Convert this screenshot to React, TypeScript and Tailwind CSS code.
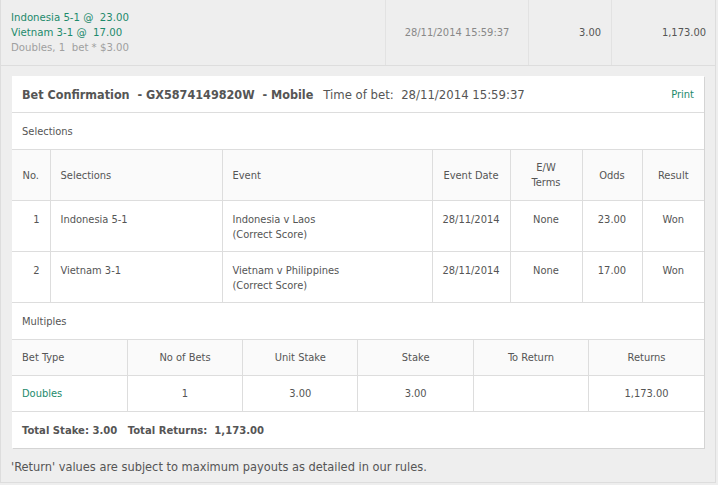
import React from 'react';

const selections = [
  { no: 1, sel: 'Indonesia 5-1', event: 'Indonesia v Laos', date: '28/11/2014', ew: 'None', odds: '23.00', result: 'Won' },
  { no: 2, sel: 'Vietnam 3-1', event: 'Vietnam v Philippines', date: '28/11/2014', ew: 'None', odds: '17.00', result: 'Won' },
];

const th = 'border border-[#dddddd] bg-[#fafafa] font-normal align-middle';
const td = 'border border-[#dddddd] align-top pt-[11px]';
const mtd = 'border border-[#dddddd] align-middle';

export default function App() {
  return (
    <div className="w-[718px] h-[485px] bg-[#eeeeee] text-[#555555] text-[11px] leading-[15px] font-['DejaVu_Sans_Condensed','DejaVu_Sans',sans-serif]">
      <div className="w-[716px] h-[483px] border-l border-r border-b border-[#dddddd]">
        {/* Summary row */}
        <div className="flex h-[66px] border-b border-[#dddddd]">
          <div className="w-[385px] border-r border-[#e2e2e2] pl-[10px] pt-[10px] text-[11.3px]">
            <div className="text-[#1d8a6c]">Indonesia 5-1 @&nbsp; 23.00</div>
            <div className="text-[#1d8a6c]">Vietnam 3-1 @&nbsp; 17.00</div>
            <div className="text-[#a0a0a0]">Doubles, 1&nbsp; bet * $3.00</div>
          </div>
          <div className="w-[143px] border-r border-[#e2e2e2] flex items-center justify-center text-[#888888]">
            28/11/2014 15:59:37
          </div>
          <div className="w-[83px] border-r border-[#e2e2e2] flex items-center justify-end pr-[10px]">3.00</div>
          <div className="flex-1 flex items-center justify-end pr-[9px]">1,173.00</div>
        </div>

        <div className="pt-[10px] pl-[11px] pr-[10px]">
          <div className="w-[692px] bg-white shadow-[1px_1px_0_#d4d4d4]">
            {/* Card header */}
            <div className="h-[37px] border-b border-[#dddddd] flex items-center px-[10px]">
              <span className="font-bold text-[12.5px]">Bet Confirmation&nbsp; - GX5874149820W&nbsp; - Mobile</span>
              <span className="ml-[10px] text-[13px]">Time of bet:&nbsp; 28/11/2014 15:59:37</span>
              <span className="ml-auto text-[#1d8a6c]">Print</span>
            </div>
            <div className="h-[36px] flex items-center px-[10px]">Selections</div>

            <table className="w-[692px] table-fixed border-collapse">
              <colgroup>
                <col className="w-[38px]" />
                <col className="w-[172px]" />
                <col className="w-[210px]" />
                <col className="w-[78px]" />
                <col className="w-[72px]" />
                <col className="w-[60px]" />
                <col className="w-[62px]" />
              </colgroup>
              <thead>
                <tr className="h-[51px]">
                  <th className={`${th} border-l-0 text-center`}>No.</th>
                  <th className={`${th} text-left pl-[10px]`}>Selections</th>
                  <th className={`${th} text-left pl-[10px]`}>Event</th>
                  <th className={`${th} text-center`}>Event Date</th>
                  <th className={`${th} text-center`}>E/W<br />Terms</th>
                  <th className={`${th} text-center`}>Odds</th>
                  <th className={`${th} border-r-0 text-center`}>Result</th>
                </tr>
              </thead>
              <tbody>
                {selections.map((s) => (
                  <tr key={s.no} className="h-[51px]">
                    <td className={`${td} border-l-0 text-right pr-[10px]`}>{s.no}</td>
                    <td className={`${td} pl-[10px]`}>{s.sel}</td>
                    <td className={`${td} pl-[10px]`}>
                      {s.event}
                      <br />
                      (Correct Score)
                    </td>
                    <td className={`${td} text-center`}>{s.date}</td>
                    <td className={`${td} text-center`}>{s.ew}</td>
                    <td className={`${td} text-center`}>{s.odds}</td>
                    <td className={`${td} border-r-0 text-center`}>{s.result}</td>
                  </tr>
                ))}
              </tbody>
            </table>

            <div className="h-[36px] flex items-center px-[10px]">Multiples</div>

            <table className="w-[692px] table-fixed border-collapse">
              <thead>
                <tr className="h-[36px]">
                  <th className={`${th} border-l-0 text-left pl-[10px]`}>Bet Type</th>
                  <th className={`${th} text-center`}>No of Bets</th>
                  <th className={`${th} text-center`}>Unit Stake</th>
                  <th className={`${th} text-center`}>Stake</th>
                  <th className={`${th} text-center`}>To Return</th>
                  <th className={`${th} border-r-0 text-center`}>Returns</th>
                </tr>
              </thead>
              <tbody>
                <tr className="h-[36px]">
                  <td className={`${mtd} border-l-0 pl-[10px] text-[#1d8a6c]`}>Doubles</td>
                  <td className={`${mtd} text-center`}>1</td>
                  <td className={`${mtd} text-center`}>3.00</td>
                  <td className={`${mtd} text-center`}>3.00</td>
                  <td className={`${mtd} text-center`}></td>
                  <td className={`${mtd} border-r-0 text-center`}>1,173.00</td>
                </tr>
              </tbody>
            </table>

            <div className="h-[36px] flex items-center px-[10px] font-bold text-[11.2px]">
              Total Stake: 3.00&nbsp;&nbsp; Total Returns:&nbsp; 1,173.00
            </div>
          </div>

          <div className="pt-[11px] -ml-[1px] text-[12.7px]">
            'Return' values are subject to maximum payouts as detailed in our rules.
          </div>
        </div>
      </div>
    </div>
  );
}
